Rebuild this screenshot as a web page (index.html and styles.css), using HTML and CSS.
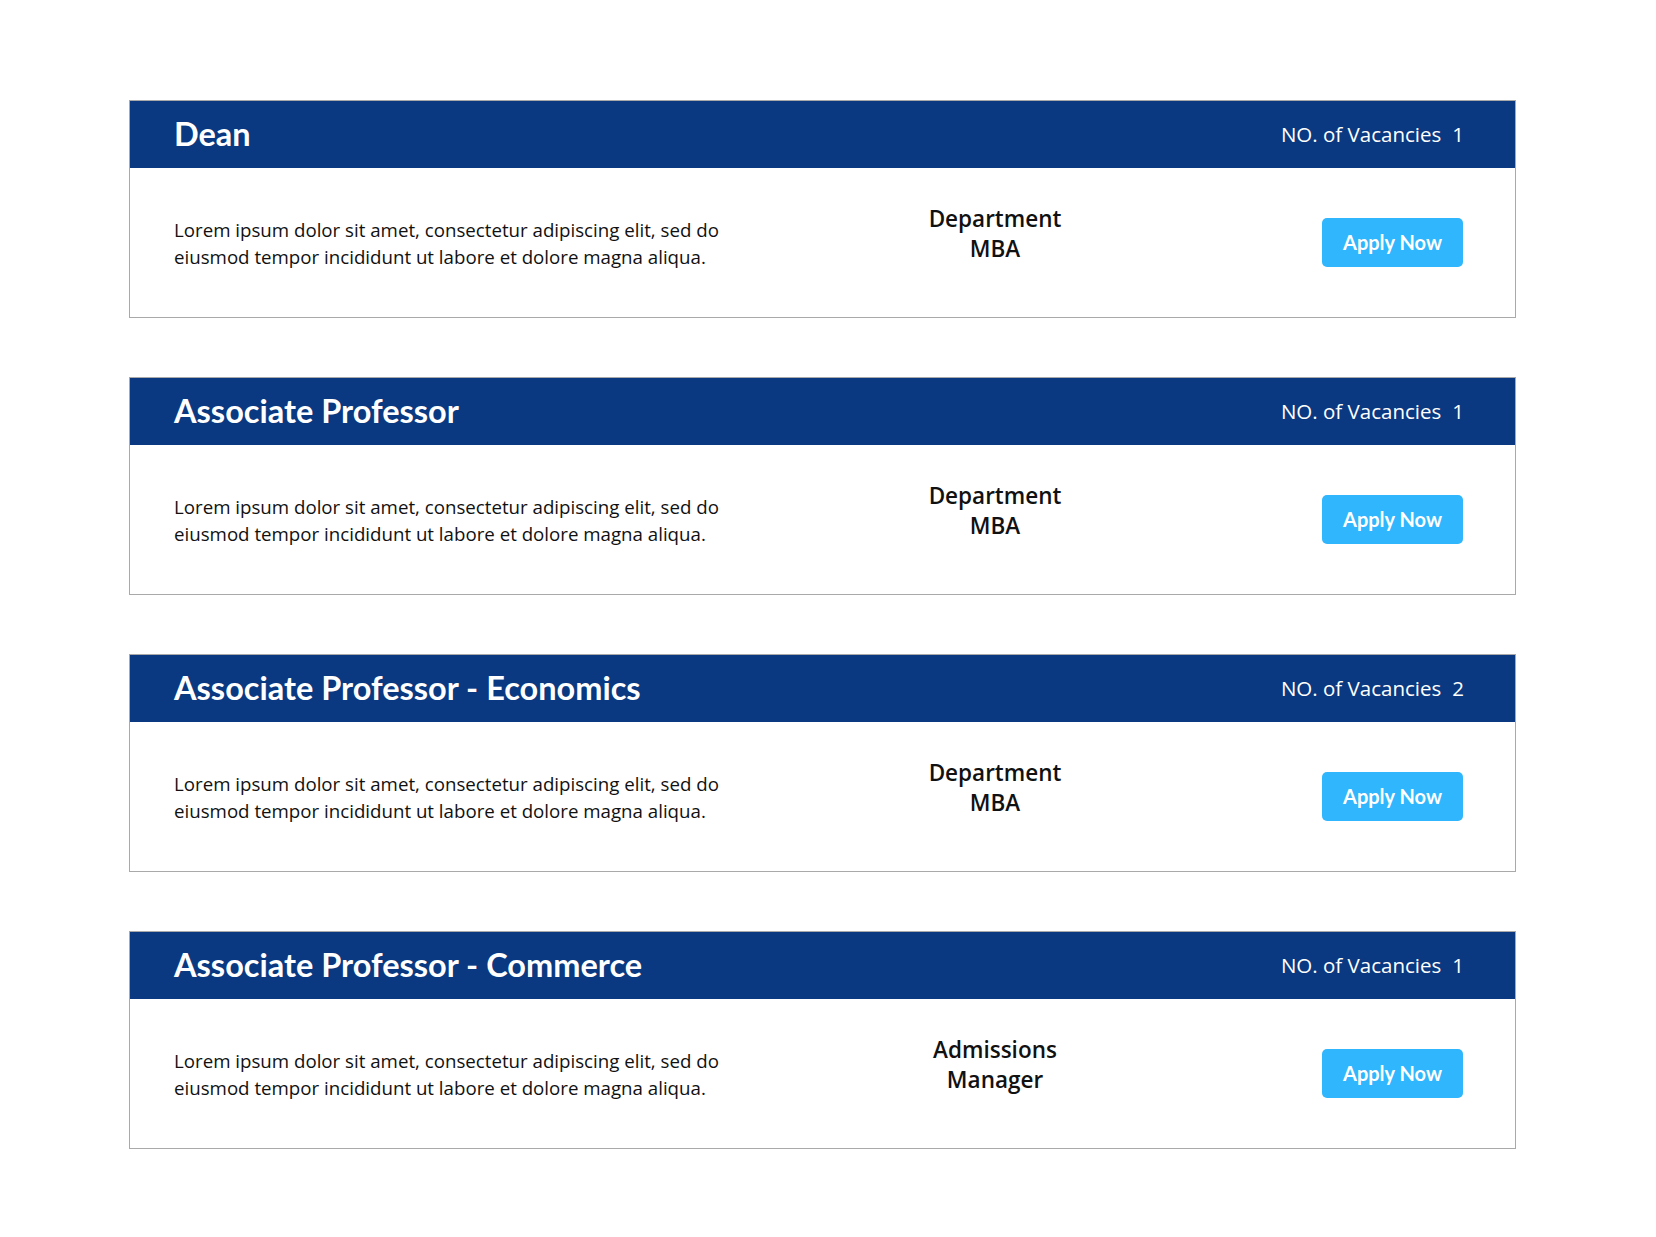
FILE: index.html
```html
<!DOCTYPE html>
<html lang="en">
<head>
<meta charset="utf-8">
<title>Vacancies</title>
<link rel="stylesheet" href="styles.css">
</head>
<body>
<main class="jobs">
  <section class="job">
    <header class="job-head">
      <h2 class="job-title">Dean</h2>
      <div class="vac"><span>NO. of Vacancies</span><span class="vac-num">1</span></div>
    </header>
    <div class="job-body">
      <p class="job-desc">Lorem ipsum dolor sit amet, consectetur adipiscing elit, sed do<br>eiusmod tempor incididunt ut labore et dolore magna aliqua.</p>
      <div class="job-dept">Department<br>MBA</div>
      <div class="job-action"><a class="apply" href="#">Apply Now</a></div>
    </div>
  </section>
  <section class="job">
    <header class="job-head">
      <h2 class="job-title">Associate Professor</h2>
      <div class="vac"><span>NO. of Vacancies</span><span class="vac-num">1</span></div>
    </header>
    <div class="job-body">
      <p class="job-desc">Lorem ipsum dolor sit amet, consectetur adipiscing elit, sed do<br>eiusmod tempor incididunt ut labore et dolore magna aliqua.</p>
      <div class="job-dept">Department<br>MBA</div>
      <div class="job-action"><a class="apply" href="#">Apply Now</a></div>
    </div>
  </section>
  <section class="job">
    <header class="job-head">
      <h2 class="job-title">Associate Professor - Economics</h2>
      <div class="vac"><span>NO. of Vacancies</span><span class="vac-num">2</span></div>
    </header>
    <div class="job-body">
      <p class="job-desc">Lorem ipsum dolor sit amet, consectetur adipiscing elit, sed do<br>eiusmod tempor incididunt ut labore et dolore magna aliqua.</p>
      <div class="job-dept">Department<br>MBA</div>
      <div class="job-action"><a class="apply" href="#">Apply Now</a></div>
    </div>
  </section>
  <section class="job">
    <header class="job-head">
      <h2 class="job-title">Associate Professor - Commerce</h2>
      <div class="vac"><span>NO. of Vacancies</span><span class="vac-num">1</span></div>
    </header>
    <div class="job-body">
      <p class="job-desc">Lorem ipsum dolor sit amet, consectetur adipiscing elit, sed do<br>eiusmod tempor incididunt ut labore et dolore magna aliqua.</p>
      <div class="job-dept">Admissions<br>Manager</div>
      <div class="job-action"><a class="apply" href="#">Apply Now</a></div>
    </div>
  </section>
</main>
</body>
</html>
```
FILE: styles.css
```css
* { box-sizing: border-box; }
html, body { margin: 0; padding: 0; background: #fff; }
body { font-family: "Open Sans", "Liberation Sans", sans-serif; color: #111; }

.jobs {
  width: 1387px;
  margin-left: 129px;
  padding-top: 100px;
  display: flex;
  flex-direction: column;
  gap: 59px;
}

.job {
  border: 1px solid #a9a9a9;
  background: #fff;
}

.job-head {
  background: #0a3981;
  color: #fff;
  height: 68px;
  display: flex;
  align-items: center;
  justify-content: space-between;
  padding: 0 51px 0 44px;
  margin: -1px -1px 0 -1px;
  border: 1px solid #a9a9a9;
  border-bottom: none;
}

.job-title {
  margin: 0;
  font-family: Lato, "Open Sans", sans-serif;
  font-weight: 700;
  font-size: 32.5px;
  line-height: 1;
}

.vac {
  font-size: 20.5px;
  font-weight: 500;
  display: flex;
  gap: 11px;
  margin-bottom: 2px;
}

.job-body {
  height: 149px;
  display: grid;
  grid-template-columns: 641px 360px 1fr;
  align-items: center;
  padding: 0 52px 0 44px;
}

.job-desc {
  margin: 0;
  font-size: 18.7px;
  line-height: 27px;
}

.job-dept {
  text-align: center;
  font-weight: 600;
  font-size: 22.5px;
  line-height: 29.6px;
  padding-bottom: 17px;
}

.job-action { display: flex; justify-content: flex-end; }

.apply {
  display: inline-flex;
  align-items: center;
  justify-content: center;
  width: 141px;
  height: 49px;
  padding-bottom: 2px;
  background: #2fb6fd;
  color: #fff;
  border-radius: 5px;
  text-decoration: none;
  font-family: Lato, "Open Sans", sans-serif;
  font-weight: 700;
  font-size: 20px;
}
```
